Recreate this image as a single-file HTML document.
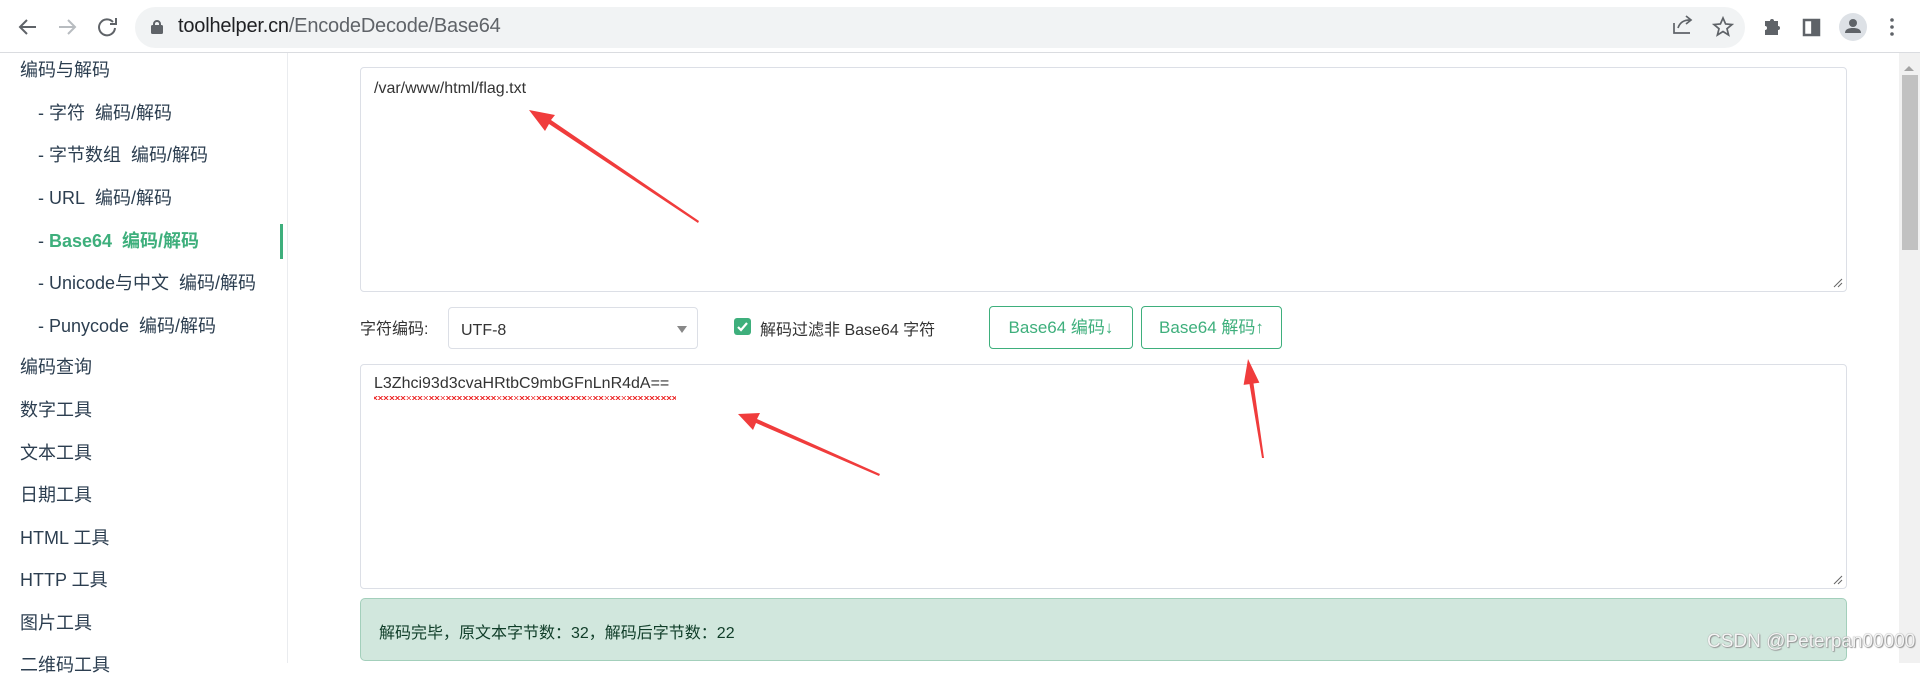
<!DOCTYPE html>
<html><head><meta charset="utf-8"><style>
*{box-sizing:border-box;margin:0;padding:0}
body{width:1920px;height:663px;overflow:hidden;background:#fff;font-family:"Liberation Sans","Noto Sans CJK SC",sans-serif;position:relative;color:#2c3e50}
.top{position:absolute;left:0;top:0;width:1920px;height:53px;background:#fff;border-bottom:1px solid #dadce0}
.addr{position:absolute;left:135px;top:7px;width:1610px;height:41px;border-radius:21px;background:#f1f3f4}
.url{position:absolute;left:178px;top:15px;font-size:20px;color:#5f6368;letter-spacing:-0.2px}
.url b{font-weight:normal;color:#202124}
.side{position:absolute;left:0;top:53px;width:288px;height:610px;border-right:1px solid #eaecef}
.si{position:absolute;font-size:18px;color:#2c3e50;white-space:nowrap;line-height:20px}
.sub{left:38px}
.act{color:#3eaf7c;font-weight:bold}
.bar{position:absolute;left:280px;top:224px;width:3px;height:35px;background:#3eaf7c}
.ta{position:absolute;left:360px;width:1487px;border:1px solid #dcdfe6;border-radius:4px;background:#fff}
.tt{position:absolute;left:13px;top:12px;font-size:16px;color:#333}
.lbl{position:absolute;font-size:16px;color:#333;white-space:nowrap;font-family:"Liberation Sans","Noto Sans CJK SC",sans-serif}
.sel{position:absolute;left:448px;top:307px;width:250px;height:42px;border:1px solid #dcdfe6;border-radius:4px}
.btn{position:absolute;top:306px;height:43px;border:1px solid #3eaf7c;border-radius:4px;color:#3eaf7c;font-size:17px;text-align:center;line-height:41px;background:#fff}
.alert{position:absolute;left:360px;top:598px;width:1487px;height:63px;background:#d1e7dd;border:1px solid #a3cfbb;border-radius:5px}
.scr{position:absolute;left:1899px;top:53px;width:21px;height:610px;background:#f1f1f1}
.wavy{position:absolute;left:13px;top:31px;width:302px;height:4px;background:repeating-linear-gradient(135deg,transparent 0 1.5px,#e33 1.5px 2.5px,transparent 2.5px 4px),repeating-linear-gradient(45deg,transparent 0 1.5px,#e33 1.5px 2.5px,transparent 2.5px 4px)}
</style></head><body>
<div class="top">
<svg width="130" height="53" style="position:absolute;left:0;top:0" fill="none" stroke="#5f6368" stroke-width="2">
<path d="M36 27H20M27 20l-7 7 7 7"/>
<path d="M59 27h16M68 20l7 7-7 7" stroke="#b8bcc0"/>
<path d="M113 22a8 8 0 1 0 2 6" /><path d="M116 18v6h-6" fill="none"/>
</svg>
<div class="addr"></div>
<svg width="14" height="16" style="position:absolute;left:150px;top:19px"><rect x="1" y="6" width="12" height="9" rx="1.5" fill="#5f6368"/><path d="M4 7V5a3 3 0 0 1 6 0v2" stroke="#5f6368" stroke-width="2" fill="none"/></svg>
<div class="url"><b>toolhelper.cn</b>/EncodeDecode/Base64</div>
<svg width="240" height="53" style="position:absolute;left:1670px;top:0" stroke="#5f6368" stroke-width="1.7" fill="none">
<path d="M4 23v10h16M8 28c2-6 6-8 12-8M16 16l5 4-5 4"/>
<path d="M53 18l2.6 6 6.4.5-5 4.2 1.6 6.3-5.6-3.5-5.6 3.5 1.6-6.3-5-4.2 6.4-.5z"/>
<path d="M95 21h5a2 2 0 0 1 4 0h4v5a2 2 0 0 1 0 4v5h-13v-5a2 2 0 0 0 0-4z" fill="#5f6368" stroke="none"/>
<rect x="134" y="20" width="15" height="15" stroke-width="2.5"/><rect x="142" y="20" width="7" height="15" fill="#5f6368"/>
<circle cx="183" cy="27" r="14" fill="#dde1e6" stroke="none"/><circle cx="183" cy="23" r="4" fill="#5f6368" stroke="none"/><path d="M175 33c0-4 4-5 8-5s8 1 8 5z" fill="#5f6368" stroke="none"/>
<circle cx="222" cy="20" r="1.8" fill="#5f6368" stroke="none"/><circle cx="222" cy="27" r="1.8" fill="#5f6368" stroke="none"/><circle cx="222" cy="34" r="1.8" fill="#5f6368" stroke="none"/>
</svg>
</div>
<div class="side"></div>
<div class="si" style="left:20px;top:60px">编码与解码</div>
<div class="si sub" style="top:103px">- 字符&nbsp; 编码/解码</div>
<div class="si sub" style="top:145px">- 字节数组&nbsp; 编码/解码</div>
<div class="si sub" style="top:188px">- URL&nbsp; 编码/解码</div>
<div class="si sub act" style="top:231px"><span style="color:#2c3e50;font-weight:normal">-</span> Base64&nbsp; 编码/解码</div>
<div class="bar"></div>
<div class="si sub" style="top:273px">- Unicode与中文&nbsp; 编码/解码</div>
<div class="si sub" style="top:316px">- Punycode&nbsp; 编码/解码</div>
<div class="si" style="left:20px;top:357px">编码查询</div>
<div class="si" style="left:20px;top:400px">数字工具</div>
<div class="si" style="left:20px;top:443px">文本工具</div>
<div class="si" style="left:20px;top:485px">日期工具</div>
<div class="si" style="left:20px;top:528px">HTML 工具</div>
<div class="si" style="left:20px;top:570px">HTTP 工具</div>
<div class="si" style="left:20px;top:613px">图片工具</div>
<div class="si" style="left:20px;top:655px">二维码工具</div>

<div class="ta" style="top:67px;height:225px"><div class="tt">/var/www/html/flag.txt</div>
<svg width="10" height="10" style="position:absolute;right:3px;bottom:3px" stroke="#666"><path d="M1 9L9 1M5 9L9 5"/></svg></div>
<div class="lbl" style="left:360px;top:315px">字符编码:</div>
<div class="sel"><div class="lbl" style="left:12px;top:14px">UTF-8</div><svg width="10" height="8" style="position:absolute;left:228px;top:18px"><path d="M0 0h10L5 7z" fill="#888"/></svg></div>
<svg width="17" height="17" style="position:absolute;left:734px;top:318px"><rect width="17" height="17" rx="3" fill="#3eaf7c"/><path d="M4 9l3 3 6-7" stroke="#fff" stroke-width="2.2" fill="none"/></svg>
<div class="lbl" style="left:760px;top:316px">解码过滤非 Base64 字符</div>
<div class="btn" style="left:989px;width:144px">Base64 编码↓</div>
<div class="btn" style="left:1141px;width:141px">Base64 解码↑</div>
<div class="ta" style="top:364px;height:225px"><div class="tt" style="top:10px">L3Zhci93d3cvaHRtbC9mbGFnLnR4dA==</div>
<div class="wavy"></div>
<svg width="10" height="10" style="position:absolute;right:3px;bottom:3px" stroke="#666"><path d="M1 9L9 1M5 9L9 5"/></svg></div>
<div class="alert"><div class="lbl" style="left:18px;top:20px;color:#0f3d28">解码完毕，原文本字节数：32，解码后字节数：22</div></div>
<div class="scr"><svg width="21" height="20" style="position:absolute;top:5px"><path d="M5 13h10L10 8z" fill="#a3a3a3"/></svg><div style="position:absolute;left:3px;top:22px;width:16px;height:175px;background:#c1c1c1"></div></div>

<svg width="1920" height="663" style="position:absolute;left:0;top:0">
<g fill="#f03c3c">
<polygon points="698,223 549,124 545,131 529,110 555,115 551,120 699,221"/>
<polygon points="879,476 756,423 753,430 738,414 760,413 757,419 880,474"/>
<polygon points="1262,458 1249.5,384.1 1243.6,384.9 1248,359 1259.4,382.7 1253.5,383.5 1264,458"/>
</g></svg>
<div style="position:absolute;left:1707px;top:631px;font-size:19px;color:#f4f4f4;text-shadow:0 0 1px #777,1px 1px 1px #999">CSDN @Peterpan00000</div>
</body></html>
